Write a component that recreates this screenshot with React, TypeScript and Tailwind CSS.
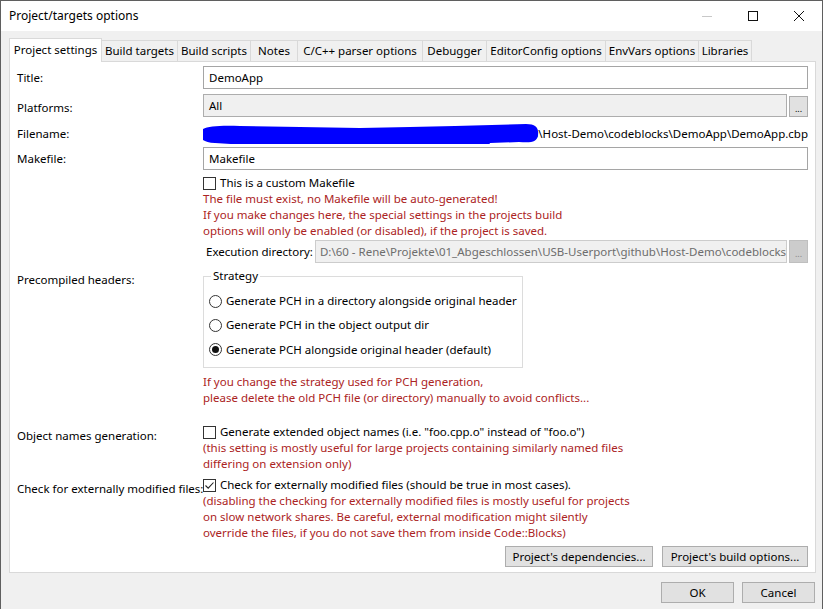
import React from "react";

const RED = "text-[#ab2323]";

const tabs = [
  { label: "Build targets", w: "w-[76px]" },
  { label: "Build scripts", w: "w-[73px]" },
  { label: "Notes", w: "w-[47px]" },
  { label: "C/C++ parser options", w: "w-[125px]" },
  { label: "Debugger", w: "w-[64px]" },
  { label: "EditorConfig options", w: "w-[119px]" },
  { label: "EnvVars options", w: "w-[93px]" },
  { label: "Libraries", w: "w-[53px]" },
];

function CheckBox({ checked }: { checked?: boolean }) {
  return (
    <span className="flex h-[13px] w-[13px] shrink-0 items-center justify-center border border-[#333] bg-white">
      {checked && (
        <svg width="11" height="11" viewBox="0 0 11 11">
          <path d="M1.5 5.5 L4.2 8.2 L9.5 2.5" fill="none" stroke="#222" strokeWidth="1.1" />
        </svg>
      )}
    </span>
  );
}

function Radio({ checked }: { checked?: boolean }) {
  return (
    <span className="flex h-[13px] w-[13px] shrink-0 items-center justify-center rounded-full border border-[#333] bg-white">
      {checked && <span className="h-[7px] w-[7px] rounded-full bg-[#111]" />}
    </span>
  );
}

function Row({
  label,
  children,
  labelClass = "self-center",
  className = "",
}: {
  label?: string;
  children: React.ReactNode;
  labelClass?: string;
  className?: string;
}) {
  return (
    <div className={`grid grid-cols-[186px_1fr] ${className}`}>
      <div className={`whitespace-nowrap ${labelClass}`}>{label}</div>
      <div className="min-w-0">{children}</div>
    </div>
  );
}

function Button({ children, className = "" }: { children: React.ReactNode; className?: string }) {
  return (
    <button className={`flex h-[21px] items-center justify-center border border-[#adadad] bg-[#e1e1e1] ${className}`}>
      {children}
    </button>
  );
}

export default function App() {
  return (
    <div className="h-[609px] w-[824px] overflow-hidden bg-white font-['Noto_Sans',sans-serif] text-[11.5px] leading-[16px] text-black">
      <div className="flex h-[609px] w-[823px] flex-col border-l border-r border-t border-[#5f5f5f] bg-[#f0f0f0]">
        {/* title bar */}
        <div className="flex h-[30px] shrink-0 items-center bg-white">
          <div className="pl-[8px] text-[12px]">Project/targets options</div>
          <div className="ml-auto flex h-full">
            <div className="flex w-[46px] items-center justify-center">
              <span className="h-px w-[10px] bg-[#c8c8c8]" />
            </div>
            <div className="flex w-[46px] items-center justify-center">
              <span className="h-[10px] w-[10px] border border-[#111]" />
            </div>
            <div className="flex w-[46px] items-center justify-center">
              <svg width="10" height="10" viewBox="0 0 10 10">
                <path d="M0 0 L10 10 M10 0 L0 10" stroke="#111" strokeWidth="1" />
              </svg>
            </div>
          </div>
        </div>

        {/* tabs */}
        <div className="ml-[8px] mt-[7px] flex items-end">
          <div className="relative z-10 -mb-px flex h-[24px] w-[93px] items-start justify-center border-l border-r border-t border-[#d9d9d9] bg-white pt-[3px]">
            Project settings
          </div>
          {tabs.map((t) => (
            <div
              key={t.label}
              className={`flex h-[21px] items-center justify-center whitespace-nowrap border-r border-t border-[#d9d9d9] bg-[#f0f0f0] ${t.w}`}
            >
              {t.label}
            </div>
          ))}
        </div>

        {/* panel */}
        <div className="ml-[8px] mr-[6px] flex h-[512px] flex-col border border-[#d9d9d9] bg-white pl-[7px] pr-[7px] pt-[4px]">
          <Row label="Title:">
            <div className="flex h-[23px] items-center border border-[#a5a5a5] bg-white px-[5px]">DemoApp</div>
          </Row>
          <Row label="Platforms:" className="mt-[5px]" labelClass="self-center pt-[4px]">
            <div className="flex gap-[2px]">
              <div className="flex h-[23px] flex-1 items-center border border-[#adadad] bg-[#f0f0f0] px-[5px]">All</div>
              <button className="mt-[2px] flex h-[21px] w-[19px] items-end justify-center border border-[#adadad] bg-[#e1e1e1] pb-[3px] text-[9px] leading-[9px]">
                ...
              </button>
            </div>
          </Row>
          <Row label="Filename:" className="mt-[7px] h-[20px]">
            <div className="relative flex h-[20px] items-center justify-end overflow-hidden whitespace-nowrap">
              <span>D:\60 - Rene\Projekte\01_Abgeschlossen\USB-Userport\github\Host-Demo\codeblocks\DemoApp\DemoApp.cbp</span>
              <svg
                className="absolute left-[-4px] top-[-4px]"
                width="345"
                height="30"
                viewBox="199 120 345 30"
              >
                <path
                  d="M200 133 C200 127 214 125 240 126 L300 127 L360 128 L410 127 L455 126 L526 124 C536 124 539 128 538 135 C537 142 532 143 519 142 L490 143 C488 148 480 148 477 145 L440 144 L380 145 L330 146 L262 146 L215 143 C203 142 200 139 200 133 Z"
                  fill="#0000ff"
                />
              </svg>
            </div>
          </Row>
          <Row label="Makefile:" className="mt-[3px]">
            <div className="flex h-[23px] items-center border border-[#a5a5a5] bg-white px-[5px]">Makefile</div>
          </Row>
          <Row className="mt-[6px]">
            <div className="flex h-[14px] items-center gap-[4px]">
              <CheckBox />
              <span>This is a custom Makefile</span>
            </div>
          </Row>
          <Row className="mt-px">
            <div className={RED}>
              <div>The file must exist, no Makefile will be auto-generated!</div>
              <div>If you make changes here, the special settings in the projects build</div>
              <div>options will only be enabled (or disabled), if the project is saved.</div>
            </div>
          </Row>
          <Row className="mt-px">
            <div className="flex items-center gap-[2px] pl-[3px]">
              <span className="whitespace-nowrap">Execution directory:</span>
              <div className="flex h-[23px] min-w-0 flex-1 items-center overflow-hidden whitespace-nowrap border border-[#cccccc] bg-[#f0f0f0] px-[4px] text-[#6d6d6d]">
                D:\60 - Rene\Projekte\01_Abgeschlossen\USB-Userport\github\Host-Demo\codeblocks\
              </div>
              <button className="flex h-[23px] w-[19px] items-end justify-center border border-[#bfbfbf] bg-[#cccccc] pb-[4px] text-[9px] leading-[9px] text-[#8a8a8a]">
                ...
              </button>
            </div>
          </Row>
          <Row label="Precompiled headers:" className="mt-[6px]" labelClass="self-start pt-[3px]">
            <fieldset className="h-[99px] w-[315px] border border-[#dcdcdc] px-[5px]">
              <legend className="ml-[2px] px-[2px] leading-[14px]">Strategy</legend>
              <div className="mt-[6px] flex h-[24px] items-center gap-[4px] whitespace-nowrap">
                <Radio />
                <span>Generate PCH in a directory alongside original header</span>
              </div>
              <div className="flex h-[24px] items-center gap-[4px] whitespace-nowrap">
                <Radio />
                <span>Generate PCH in the object output dir</span>
              </div>
              <div className="flex h-[25px] items-center gap-[4px] whitespace-nowrap">
                <Radio checked />
                <span>Generate PCH alongside original header (default)</span>
              </div>
            </fieldset>
          </Row>
          <Row className="mt-[6px]">
            <div className={RED}>
              <div>If you change the strategy used for PCH generation,</div>
              <div>please delete the old PCH file (or directory) manually to avoid conflicts...</div>
            </div>
          </Row>
          <Row label="Object names generation:" className="mt-[18px]" labelClass="self-start pt-[4px]">
            <div className="flex h-[16px] items-center gap-[4px]">
              <CheckBox />
              <span>Generate extended object names (i.e. "foo.cpp.o" instead of "foo.o")</span>
            </div>
            <div className={RED}>
              <div>(this setting is mostly useful for large projects containing similarly named files</div>
              <div>differing on extension only)</div>
            </div>
          </Row>
          <Row label="Check for externally modified files:" className="mt-[5px]" labelClass="self-start pt-[4px] -mr-[10px]">
            <div className="flex h-[16px] items-center gap-[4px]">
              <CheckBox checked />
              <span>Check for externally modified files (should be true in most cases).</span>
            </div>
            <div className={RED}>
              <div>(disabling the checking for externally modified files is mostly useful for projects</div>
              <div>on slow network shares. Be careful, external modification might silently</div>
              <div>override the files, if you do not save them from inside Code::Blocks)</div>
            </div>
          </Row>
          <div className="mt-[5px] flex justify-end gap-[9px]">
            <Button className="w-[148px]">Project's dependencies...</Button>
            <Button className="w-[146px]">Project's build options...</Button>
          </div>
        </div>

        {/* dialog buttons */}
        <div className="mr-[7px] mt-[9px] flex justify-end gap-[8px]">
          <Button className="w-[73px]">OK</Button>
          <Button className="w-[73px]">Cancel</Button>
        </div>
      </div>
    </div>
  );
}
